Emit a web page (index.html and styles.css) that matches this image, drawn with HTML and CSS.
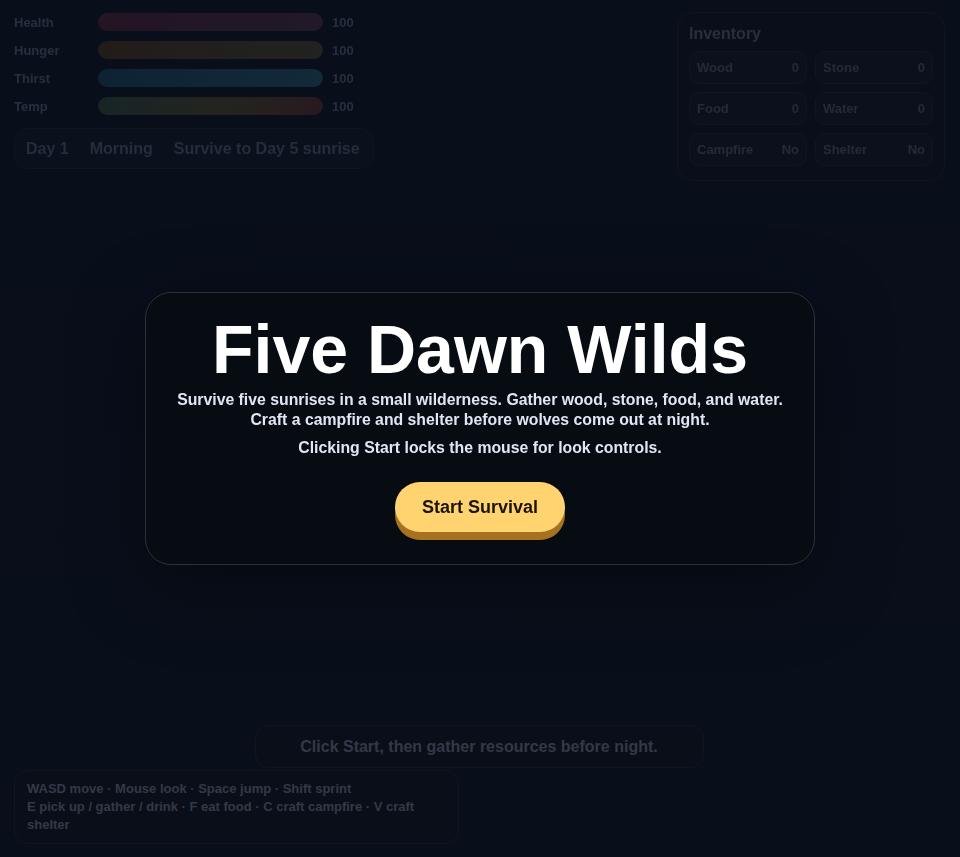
FILE: index.html
```html
<!DOCTYPE html>
<html lang="en">
<head>
<meta charset="utf-8">
<title>Five Dawn Wilds</title>
<link rel="stylesheet" href="styles.css">
</head>
<body>
<div class="app">
  <div class="top">
    <div class="stats">
      <div class="stat"><span class="stat-label">Health</span><div class="bar"><div class="fill fill-health" style="width:100%"></div></div><span class="stat-val">100</span></div>
      <div class="stat"><span class="stat-label">Hunger</span><div class="bar"><div class="fill fill-hunger" style="width:100%"></div></div><span class="stat-val">100</span></div>
      <div class="stat"><span class="stat-label">Thirst</span><div class="bar"><div class="fill fill-thirst" style="width:100%"></div></div><span class="stat-val">100</span></div>
      <div class="stat"><span class="stat-label">Temp</span><div class="bar"><div class="fill fill-temp" style="width:100%"></div></div><span class="stat-val">100</span></div>
      <div class="daypill"><span>Day 1</span><span>Morning</span><span>Survive to Day 5 sunrise</span></div>
    </div>
    <div class="inventory">
      <div class="inv-title">Inventory</div>
      <div class="inv-grid">
        <div class="inv-cell"><span>Wood</span><span>0</span></div>
        <div class="inv-cell"><span>Stone</span><span>0</span></div>
        <div class="inv-cell"><span>Food</span><span>0</span></div>
        <div class="inv-cell"><span>Water</span><span>0</span></div>
        <div class="inv-cell"><span>Campfire</span><span>No</span></div>
        <div class="inv-cell"><span>Shelter</span><span>No</span></div>
      </div>
    </div>
  </div>
  <div class="bottom">
    <div class="hint">Click Start, then gather resources before night.</div>
    <div class="controls">WASD move · Mouse look · Space jump · Shift sprint<br>E pick up / gather / drink · F eat food · C craft campfire · V craft shelter</div>
  </div>
</div>
<div class="overlay">
  <div class="modal">
    <h1 class="title">Five Dawn Wilds</h1>
    <p class="sub">Survive five sunrises in a small wilderness. Gather wood, stone, food, and water. Craft a campfire and shelter before wolves come out at night.</p>
    <p class="sub">Clicking Start locks the mouse for look controls.</p>
    <button class="start">Start Survival</button>
  </div>
</div>
</body>
</html>
```
FILE: styles.css
```css
html, body {
  margin: 0;
  padding: 0;
}
body {
  background: linear-gradient(180deg, #0b1221 0%, #0c1320 100%);
  font-family: "Liberation Sans", Arial, sans-serif;
  font-weight: bold;
  height: 857px;
  overflow: hidden;
}
.app {
  height: 857px;
  box-sizing: border-box;
  padding: 12px 15px 13px 14px;
  display: flex;
  flex-direction: column;
  justify-content: space-between;
}
.top {
  display: flex;
  justify-content: space-between;
  align-items: flex-start;
  filter: blur(0.7px);
}
.stats {
  display: flex;
  flex-direction: column;
  align-items: flex-start;
  padding-top: 1px;
}
.stat {
  display: flex;
  align-items: center;
  height: 18px;
  margin-bottom: 10px;
  font-size: 13px;
  color: #3a4254;
}
.stat-label {
  width: 84px;
}
.bar {
  width: 225px;
  height: 18px;
  border-radius: 9px;
  background: #141b2a;
  overflow: hidden;
}
.fill {
  height: 100%;
  border-radius: 9px;
}
.fill-health { background: linear-gradient(90deg, #351c2c, #302236); }
.fill-hunger { background: linear-gradient(90deg, #32271d, #31312a); }
.fill-thirst { background: linear-gradient(90deg, #123146, #1b3c4f); }
.fill-temp { background: linear-gradient(90deg, #213531, #343327 55%, #3b2327); }
.stat-val {
  margin-left: 9px;
  color: #3a4254;
}
.daypill {
  margin-top: 3px;
  height: 41px;
  box-sizing: border-box;
  display: flex;
  align-items: center;
  gap: 21px;
  padding: 0 13px 0 11px;
  border: 1px solid #151c2b;
  border-radius: 14px;
  background: #0d1422;
  font-size: 16px;
  color: #384052;
}
.inventory {
  width: 268px;
  box-sizing: border-box;
  padding: 11px 11px 14px 11px;
  border: 1px solid #151c2a;
  border-radius: 16px;
  background: #0c1220;
}
.inv-title {
  font-size: 16px;
  line-height: 20px;
  color: #3c4353;
  margin-bottom: 7px;
}
.inv-grid {
  display: grid;
  grid-template-columns: 1fr 1fr;
  gap: 8px;
}
.inv-cell {
  height: 33px;
  box-sizing: border-box;
  display: flex;
  align-items: center;
  justify-content: space-between;
  padding: 0 7px;
  border: 1px solid #161d2b;
  border-radius: 10px;
  background: #0e1523;
  font-size: 13px;
  color: #353c4b;
}
.bottom {
  display: flex;
  flex-direction: column;
  gap: 2px;
}
.hint {
  align-self: center;
  margin-left: -1px;
  width: 449px;
  height: 43px;
  box-sizing: border-box;
  display: flex;
  align-items: center;
  justify-content: center;
  border: 1px solid #161d29;
  border-radius: 14px;
  background: #0c121d;
  font-size: 16px;
  color: #4b5262;
}
.controls {
  width: 445px;
  box-sizing: border-box;
  padding: 9px 12px 9px 12px;
  border: 1px solid #161d29;
  border-radius: 14px;
  background: #0c121d;
  font-size: 13px;
  line-height: 18px;
  color: #4c5363;
}
.overlay {
  position: fixed;
  inset: 0;
  display: flex;
  align-items: center;
  justify-content: center;
  background: rgba(7, 10, 17, 0.35);
}
.modal {
  width: 670px;
  box-sizing: border-box;
  padding: 22px 24px 32px;
  border: 1px solid #2b3139;
  border-radius: 26px;
  background: #070b12;
  box-shadow: 0 20px 80px rgba(0, 0, 0, 0.4);
  text-align: center;
}
.title {
  margin: 0 0 7px;
  font-size: 68px;
  line-height: 68px;
  color: #ffffff;
}
.sub {
  margin: 0 0 8px;
  font-size: 15.8px;
  line-height: 20px;
  color: #dfe6f4;
}
.start {
  margin-top: 16px;
  width: 170px;
  height: 50px;
  border: none;
  border-radius: 25px;
  background: #ffd36f;
  box-shadow: 0 8px 0 #a6721f;
  font-family: "Liberation Sans", Arial, sans-serif;
  font-weight: bold;
  font-size: 18px;
  color: #1b140a;
  cursor: pointer;
}
```
